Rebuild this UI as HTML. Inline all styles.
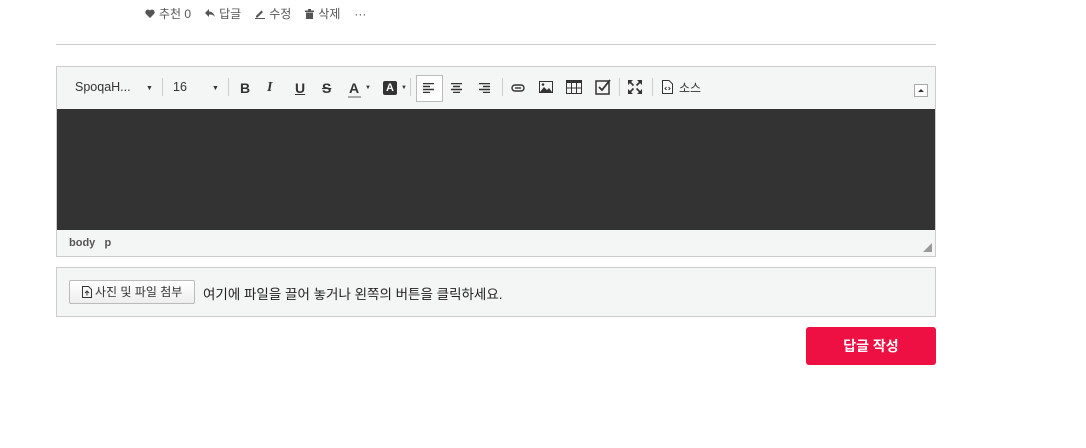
<!DOCTYPE html>
<html><head><meta charset="utf-8"><style>
body{margin:0;width:1086px;height:448px;background:#fff;font-family:"Liberation Sans","Noto Sans CJK KR",sans-serif;position:relative;overflow:hidden}
.a{position:absolute}
.meta{top:5px;left:145px;font-size:12px;color:#555;display:flex;gap:14px;align-items:center}
.meta span{display:flex;align-items:center;gap:4px}
.hr{top:44px;left:56px;width:880px;height:1px;background:#ccc}
.ed{top:66px;left:56px;width:878px;height:189px;border:1px solid #ccc;background:#f4f5f5}
.tb{height:42px;position:relative;font-size:13px;color:#333}
.dark{position:absolute;top:42px;left:0;width:878px;height:121px;background:#333}
.bt{position:absolute;top:170px;left:12px;font-size:11px;font-weight:bold;color:#555}
.ti{position:absolute;top:13px;font-size:14px;color:#333}
.ic{position:absolute;top:13px}
.sep{position:absolute;top:11px;width:1px;height:18px;background:#ccc}
.up{top:267px;left:56px;width:878px;height:48px;border:1px solid #ccc;background:#f4f5f5}
.ub{position:absolute;left:12px;top:12px;width:124px;height:22px;border:1px solid #bbb;border-radius:2px;background:linear-gradient(#fff,#eee);font-size:12px;color:#333;line-height:22px;text-align:center}
.ut{position:absolute;left:146px;top:15px;font-size:13.5px;color:#222}
.btn{top:327px;left:806px;width:130px;height:38px;background:#ee0f43;border-radius:3px;color:#fff;font-size:14px;font-weight:bold;text-align:center;line-height:38px}
</style></head><body>
<div class="a meta">
<span><svg width="10" height="9" viewBox="0 0 10 9"><path d="M5 9L1 5A2.3 2.3 0 0 1 5 1.5A2.3 2.3 0 0 1 9 5Z" fill="#555"/></svg>추천 0</span>
<span><svg width="10" height="9" viewBox="0 0 10 9"><path d="M0 4L4 0V2.5C7 2.5 9 4.5 10 8C8.5 6 7 5.5 4 5.5V8Z" fill="#555"/></svg>답글</span>
<span><svg width="10" height="10" viewBox="0 0 10 10"><path d="M1 7L6.5 1.5L8 3L2.5 8.5H1Z" fill="#555"/><rect x="0" y="9" width="10" height="1" fill="#555"/></svg>수정</span>
<span><svg width="9" height="10" viewBox="0 0 9 10"><rect x="0" y="1.5" width="9" height="1.5" fill="#555"/><rect x="3" y="0" width="3" height="2" fill="#555"/><rect x="1" y="3.5" width="7" height="6.5" fill="#555"/></svg>삭제</span>
<span>···</span></div>
<div class="a hr"></div>
<div class="a ed">
 <div class="tb">
  <span class="ti" style="left:18px;font-size:12.5px">SpoqaH...</span><span class="ti" style="left:89px;font-size:7px;top:18px">▼</span>
  <div class="sep" style="left:105px"></div>
  <span class="ti" style="left:116px;font-size:12.5px">16</span><span class="ti" style="left:155px;font-size:7px;top:18px">▼</span>
  <div class="sep" style="left:171px"></div>
  <span class="ti" style="left:183px;font-weight:bold">B</span>
  <span class="ti" style="left:210px;font-style:italic;font-weight:bold;font-family:'Liberation Serif'">I</span>
  <span class="ti" style="left:238px;text-decoration:underline;font-weight:bold">U</span>
  <span class="ti" style="left:265px;text-decoration:line-through;font-weight:bold">S</span>
  <span class="ti" style="left:292px;font-weight:bold">A</span><div style="position:absolute;left:291px;top:29px;width:13px;height:2px;background:#aaa"></div><span class="ti" style="left:308px;font-size:6px;top:18px">▼</span>
  <div style="position:absolute;left:326px;top:14px;width:14px;height:14px;background:#333;border-radius:2px;color:#fff;font-size:11px;font-weight:bold;text-align:center;line-height:14px">A</div><span class="ti" style="left:344px;font-size:6px;top:18px">▼</span>
  <div class="sep" style="left:353px"></div>
  <div style="position:absolute;left:359px;top:8px;width:25px;height:25px;border:1px solid #bbb;background:#fff"></div>
  <svg class="ic" style="left:366px;top:16px" width="11" height="10"><path d="M0 .5H11M0 3.5H7M0 6.5H11M0 9.5H7" stroke="#333" stroke-width="1.4"/></svg>
  <svg class="ic" style="left:394px;top:16px" width="11" height="10"><path d="M0 .5H11M2 3.5H9M0 6.5H11M2 9.5H9" stroke="#333" stroke-width="1.4"/></svg>
  <svg class="ic" style="left:422px;top:16px" width="11" height="10"><path d="M0 .5H11M4 3.5H11M0 6.5H11M4 9.5H11" stroke="#333" stroke-width="1.4"/></svg>
  <div class="sep" style="left:445px"></div>
  <svg class="ic" style="left:454px;top:17px" width="14" height="8"><rect x="1" y="1" width="12" height="6" rx="3" fill="none" stroke="#333" stroke-width="1.4"/><path d="M4 4H10" stroke="#333" stroke-width="1.4"/></svg>
  <svg class="ic" style="left:482px;top:14px" width="14" height="12"><rect x=".5" y=".5" width="13" height="11" fill="none" stroke="#333"/><path d="M1 11L5 6L8 9L10 7L13 11Z" fill="#333"/><circle cx="4" cy="3.5" r="1.3" fill="#333"/></svg>
  <svg class="ic" style="left:509px;top:13px" width="16" height="14"><rect x=".5" y=".5" width="15" height="13" fill="none" stroke="#333"/><rect x="0" y="0" width="16" height="3" fill="#333"/><path d="M0 8H16M5.5 3V14M10.5 3V14" stroke="#333"/></svg>
  <svg class="ic" style="left:538px;top:12px" width="16" height="16"><rect x="1" y="2" width="13" height="13" fill="none" stroke="#333" stroke-width="1.5"/><path d="M4 8L7 11L15 1" fill="none" stroke="#333" stroke-width="1.8"/></svg>
  <div class="sep" style="left:562px"></div>
  <svg class="ic" style="left:571px;top:13px" width="14" height="14"><path d="M0 0H5L0 5ZM14 0V5L9 0ZM0 14V9L5 14ZM14 14H9L14 9Z" fill="#333"/><path d="M2 2L5.5 5.5M12 2L8.5 5.5M2 12L5.5 8.5M12 12L8.5 8.5" stroke="#333" stroke-width="1.6"/></svg>
  <div class="sep" style="left:595px"></div>
  <svg class="ic" style="left:605px;top:13px" width="11" height="14"><path d="M.5 .5H7L10.5 4V13.5H.5Z" fill="#fff" stroke="#333"/><path d="M4.5 7L3 8.5L4.5 10M6.5 7L8 8.5L6.5 10" fill="none" stroke="#333"/></svg>
  <span class="ti" style="left:622px;top:12px;font-size:12px">소스</span>
  <div style="position:absolute;left:857px;top:17px;width:12px;height:11px;border:1px solid #aaa;background:#fff"><div style="margin:4px auto 0;width:0;height:0;border-left:3px solid transparent;border-right:3px solid transparent;border-bottom:3px solid #333"></div></div>
 </div>
 <div class="dark"></div>
 <div class="bt">body&nbsp;&nbsp;&nbsp;p</div>
 <div style="position:absolute;right:3px;bottom:4px;width:0;height:0;border-left:9px solid transparent;border-bottom:9px solid #999"></div>
</div>
<div class="a up"><div class="ub"><svg width="10" height="12" viewBox="0 0 10 12" style="vertical-align:-2px"><path d="M.5 .5H6.5L9.5 3.5V11.5H.5Z" fill="none" stroke="#333"/><path d="M5 9.5V5M3 7L5 5L7 7" fill="none" stroke="#333"/></svg> 사진 및 파일 첨부</div><div class="ut">여기에 파일을 끌어 놓거나 왼쪽의 버튼을 클릭하세요.</div></div>
<div class="a btn">답글 작성</div>
</body></html>
